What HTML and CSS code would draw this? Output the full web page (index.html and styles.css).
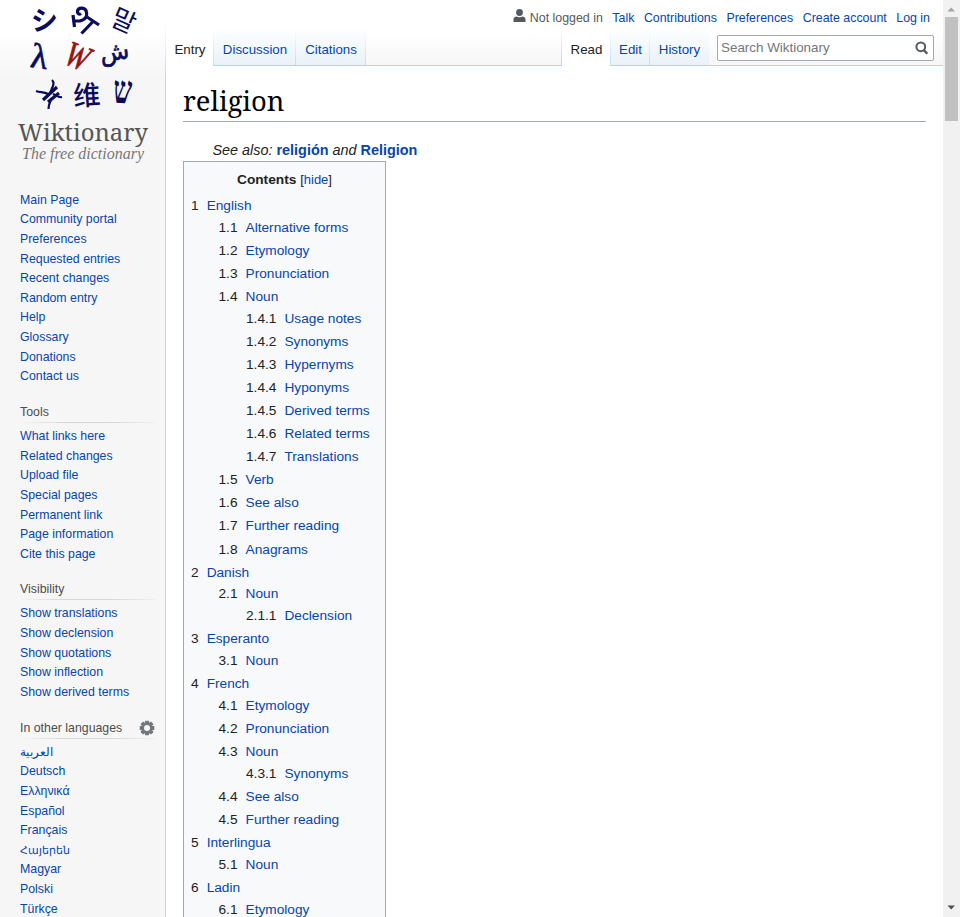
FILE: index.html
```html
<!DOCTYPE html>
<html lang="en">
<head>
<meta charset="utf-8">
<title>religion - Wiktionary</title>
<link rel="stylesheet" href="styles.css">
</head>
<body>
<div class="page">
<aside class="sidebar">
<a class="logo" href="#">
<svg width="165" height="175" viewBox="0 0 165 175" aria-label="Wiktionary">
<g class="glyphs" text-anchor="middle">
<text class="cjk bold" font-size="27" transform="translate(45 30) rotate(-3)">シ</text>
<g fill="none" stroke="#0b0b5c" stroke-width="3.200"><path d="M73 15l1.500 12M73.500 21h6c6-1 8-5 7-9-1-5-8-5-9-1-.5 2.500 1.500 4 3.500 2.500"/><path d="M87 17l12 8M93.500 21L81.500 33.500"/></g>
<text class="kr" font-size="26" transform="translate(120 29) rotate(24)">말</text>
<text class="serif lambda" font-size="35" transform="translate(38 68) rotate(8)">λ</text>
<text class="serif w" font-size="31" transform="translate(73 67) rotate(22) scale(.9 1.150)">W</text>
<text class="arab" font-size="24" transform="translate(115.500 60) rotate(-8)">ش</text>
<g fill="none" stroke="#0b0b5c"><path stroke-width="2.200" d="M36 91c5 2 8 0 14 4M52 80c3 3 1 6-2 13M48.500 109c0-5 2-7 3-11M53 94c4 2 6 4 9 3"/><path stroke-width="3.200" d="M43 100l14-13M48 102l11-9"/></g>
<text class="cjk med" font-size="27" transform="translate(87.500 105) rotate(-4)">维</text>
<text class="heb" font-size="31" transform="translate(122 103) rotate(3) scale(.85 1.250)">ש</text>
</g>
<text class="brand" x="18" y="141" textLength="130" lengthAdjust="spacingAndGlyphs">Wiktionary</text>
<text class="motto" x="22" y="159" textLength="122" lengthAdjust="spacingAndGlyphs">The free dictionary</text>
</svg></a>
<nav class="portal first"><ul><li><a>Main Page</a></li><li><a>Community portal</a></li><li><a>Preferences</a></li><li><a>Requested entries</a></li><li><a>Recent changes</a></li><li><a>Random entry</a></li><li><a>Help</a></li><li><a>Glossary</a></li><li><a>Donations</a></li><li><a>Contact us</a></li></ul></nav>
<nav class="portal"><h3>Tools</h3><ul><li><a>What links here</a></li><li><a>Related changes</a></li><li><a>Upload file</a></li><li><a>Special pages</a></li><li><a>Permanent link</a></li><li><a>Page information</a></li><li><a>Cite this page</a></li></ul></nav>
<nav class="portal"><h3>Visibility</h3><ul><li><a>Show translations</a></li><li><a>Show declension</a></li><li><a>Show quotations</a></li><li><a>Show inflection</a></li><li><a>Show derived terms</a></li></ul></nav>
<nav class="portal"><h3>In other languages <svg class="gear" width="16" height="16" viewBox="-8 -8 16 16"><g fill="#72777d"><rect x="-2" y="-7.300" width="4" height="14.600" rx=".6"/><rect x="-2" y="-7.300" width="4" height="14.600" rx=".6" transform="rotate(45)"/><rect x="-2" y="-7.300" width="4" height="14.600" rx=".6" transform="rotate(90)"/><rect x="-2" y="-7.300" width="4" height="14.600" rx=".6" transform="rotate(135)"/><circle r="5.500"/></g><circle r="3" fill="#f6f6f6"/></svg></h3><ul><li><a lang="ar">العربية</a></li><li><a>Deutsch</a></li><li><a>Ελληνικά</a></li><li><a>Español</a></li><li><a>Français</a></li><li><a class="hy" lang="hy">Հայերեն</a></li><li><a>Magyar</a></li><li><a>Polski</a></li><li><a>Türkçe</a></li></ul></nav>
</aside>
<div class="main">
<header class="head">
<div class="personal"><svg width="13" height="14" viewBox="0 0 13 14" fill="#54595d"><circle cx="6.500" cy="3.500" r="3.400"/><path d="M.5 13v-2.500c0-2 1.500-3 3-3 1.500 1 4.500 1 6 0 1.500 0 3 1 3 3V13z"/></svg><span>Not logged in</span><a>Talk</a><a>Contributions</a><a>Preferences</a><a>Create account</a><a>Log in</a></div>
<div class="tabs"><span class="tab on entry">Entry</span><a class="tab disc">Discussion</a><a class="tab cit">Citations</a><span class="gap"></span><span class="tab on read">Read</span><a class="tab edit">Edit</a><a class="tab hist">History</a>
<div class="searchwrap"><div class="search"><span>Search Wiktionary</span><svg width="14" height="14" viewBox="0 0 14 14" fill="none" stroke="#54595d"><circle cx="5.800" cy="5.800" r="4.400" stroke-width="2"/><path d="M8.800 9l3.500 3.800" stroke-width="2.400"/></svg></div></div></div>
</header>
<main class="content">
<h1>religion</h1>
<div class="see">See also: <b>religión</b> and <b>Religion</b></div>
<div class="toc">
<div class="toctitle"><strong>Contents</strong> <span>[<a>hide</a>]</span></div>
<ul>
<li><i>1</i><a>English</a><ul>
<li><i>1.1</i><a>Alternative forms</a></li><li><i>1.2</i><a>Etymology</a></li><li><i>1.3</i><a>Pronunciation</a></li>
<li><i>1.4</i><a>Noun</a><ul><li><i>1.4.1</i><a>Usage notes</a></li><li><i>1.4.2</i><a>Synonyms</a></li><li><i>1.4.3</i><a>Hypernyms</a></li><li><i>1.4.4</i><a>Hyponyms</a></li><li><i>1.4.5</i><a>Derived terms</a></li><li><i>1.4.6</i><a>Related terms</a></li><li><i>1.4.7</i><a>Translations</a></li></ul></li>
<li><i>1.5</i><a>Verb</a></li><li><i>1.6</i><a>See also</a></li><li><i>1.7</i><a>Further reading</a></li><li><i>1.8</i><a>Anagrams</a></li></ul></li>
<li><i>2</i><a>Danish</a><ul><li><i>2.1</i><a>Noun</a><ul><li><i>2.1.1</i><a>Declension</a></li></ul></li></ul></li>
<li><i>3</i><a>Esperanto</a><ul><li><i>3.1</i><a>Noun</a></li></ul></li>
<li><i>4</i><a>French</a><ul><li><i>4.1</i><a>Etymology</a></li><li><i>4.2</i><a>Pronunciation</a></li><li><i>4.3</i><a>Noun</a><ul><li><i>4.3.1</i><a>Synonyms</a></li></ul></li><li><i>4.4</i><a>See also</a></li><li><i>4.5</i><a>Further reading</a></li></ul></li>
<li><i>5</i><a>Interlingua</a><ul><li><i>5.1</i><a>Noun</a></li></ul></li>
<li><i>6</i><a>Ladin</a><ul><li><i>6.1</i><a>Etymology</a></li></ul></li>
</ul></div>
</main>
</div>
<div class="scroll"><svg width="17" height="17"><path d="M4.500 11.500h7.500L8.200 7.500z" fill="#a3a3a3"/></svg><div class="thumb"></div><svg class="down" width="17" height="17"><path d="M4.500 5.500h7.500L8.200 9.500z" fill="#505050"/></svg></div>
</div>
</body>
</html>
```
FILE: styles.css
```css
* { box-sizing: border-box; }
body { margin: 0; background: #fff; font-family: "Liberation Sans", Arial, sans-serif; color: #222; }
a, b { color: #0645ad; text-decoration: none; }
ul { list-style: none; margin: 0; padding: 0; }
.page { display: flex; width: 960px; height: 917px; overflow: hidden; }
.sidebar { width: 166px; flex: none; background: linear-gradient(#fff 24px, #b5ddf8 79px) right / 1px 100% no-repeat, linear-gradient(#fff 30px, #f6f6f6 79px); }
.logo, .logo svg { display: block; }
.logo { height: 190.600px; }
.glyphs { fill: #0b0b5c; }
.cjk { font-family: "Noto Sans CJK JP", sans-serif; }
.kr { font-family: "Noto Sans CJK KR", sans-serif; }
.bold { font-weight: bold; }
.med { font-weight: 500; }
.serif { font-family: "Liberation Serif", serif; font-style: italic; stroke: #0b0b5c; stroke-width: .7; }
.lambda { font-style: normal; }
.arab { font-family: "DejaVu Sans", sans-serif; stroke: #0b0b5c; stroke-width: .6; }
.heb { font-family: "Liberation Serif", "DejaVu Sans", serif; font-weight: bold; }
.serif.w { fill: #951414; stroke: #951414; }
.brand { font: 24px "Noto Serif", "DejaVu Serif", serif; fill: #555; }
.motto { font: italic 17px "Liberation Serif", serif; fill: #777; }
.portal { padding: 0 11px 0 20px; margin-bottom: 14.900px; font-size: 12.350px; }
.portal li { height: 19.650px; line-height: 19.650px; white-space: nowrap; }
.portal h3 { display: flex; justify-content: space-between; align-items: center; margin: 0 0 4.100px; font-weight: normal; font-size: 12.350px; line-height: 19px; height: 21px; color: #4d4d4d; background: linear-gradient(90deg, #f6f6f6, #d3d6da 33%, #d3d6da 66%, #f0f0f0) bottom / 100% 1px no-repeat; }
.hy { font-size: 11px; }
.head { height: 66px; background: linear-gradient(#fff 50%, #f6f6f6); }
.main { flex: 1; min-width: 0; }
.personal { height: 28px; display: flex; justify-content: flex-end; gap: 9.500px; padding: 9px 13px 0 0; font-size: 12.400px; line-height: 19px; color: #54595d; white-space: nowrap; }
.personal svg { margin-right: -6px; }
.tabs { display: flex; height: 38px; font-size: 13.300px; }
.tab { padding-top: 14px; line-height: 15px; text-align: center; border-bottom: 1px solid #a7d7f9; background: linear-gradient(#fff, #b9e0fa) right / 1px 100% no-repeat, linear-gradient(#fff, #e8f2f8); }
.tab.on { background: linear-gradient(#fff, #b9e0fa) right / 1px 100% no-repeat, #fff; border-bottom: 0; }
.entry { width: 48px; }
.disc { width: 82px; }
.cit { width: 70px; }
.gap { flex: 1; border-bottom: 1px solid #a7d7f9; background: linear-gradient(#fff, #a7d7f9) right / 1px 100% no-repeat; }
.read { width: 49px; }
.edit { width: 39px; }
.tab.hist { width: 59px; background: linear-gradient(#fff, #e8f2f8); }
.searchwrap { width: 234px; padding: 7px 9px 0 8px; border-bottom: 1px solid #a7d7f9; }
.search { height: 26px; border: 1px solid #a2a9b1; border-radius: 2px; background: #fff; display: flex; justify-content: space-between; align-items: center; padding: 0 4px 1px 3px; font-size: 13.400px; color: #72777d; }
.content { padding: 0 17px; }
h1 { margin: 0; height: 56px; border-bottom: 1px solid #a2a9b1; font: 27.300px/34px "Noto Serif", "DejaVu Serif", serif; padding-top: 18px; color: #000; }
.see { margin: 18px 0 0 29.500px; font-size: 14.400px; line-height: 21px; font-style: italic; }
.see b { font-style: normal; }
.toc { width: 203px; border: 1px solid #a2a9b1; background: #f8f9fa; padding: 7.300px 7px; font-size: 13.700px; height: 800px; }
.toctitle { text-align: center; line-height: 22px; }
.toctitle span { font-size: 13px; }
.toc > ul { margin-top: 4px; }
.toc li { line-height: 21.800px; margin-bottom: 1.260px; white-space: nowrap; }
.toc li ul { margin-left: 27.500px; }
.toc i { font-style: normal; margin-right: 8px; }
.scroll { width: 17px; background: #f1f1f1; display: flex; flex-direction: column; flex: none; }
.scroll svg { flex: none; }
.thumb { width: 13px; height: 104px; margin: 0 2px; background: #c1c1c1; }
.down { margin-top: auto; }
```
